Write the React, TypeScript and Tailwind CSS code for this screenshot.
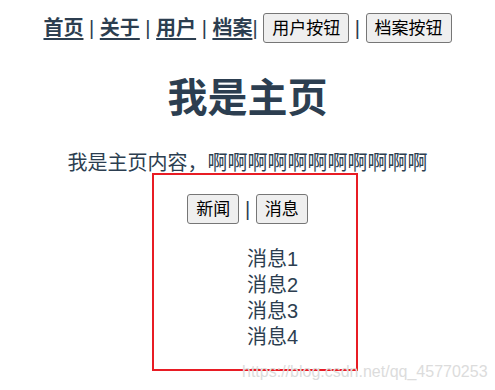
const navLinks = ["首页", "关于", "用户", "档案"];
const messages = ["消息1", "消息2", "消息3", "消息4"];

function Btn({ label, className = "" }: { label: string; className?: string }) {
  return (
    <button
      className={`h-[30px] px-[8px] bg-[#efefef] border border-[#767676] rounded-[3px] text-[17px] leading-none text-black ${className}`}
    >
      {label}
    </button>
  );
}

export default function App() {
  return (
    <div className="relative w-[495px] h-[390px] overflow-hidden bg-white text-[#2c3e50] font-['Liberation_Sans','Noto_Sans_CJK_SC',sans-serif]">
      {/* Nav */}
      <nav className="flex items-center justify-center pt-[13px] text-[20px] leading-[30px] whitespace-pre">
        {navLinks.map((label, i) => (
          <span key={label} className="flex items-center">
            <a href="#" className="font-bold underline underline-offset-[3px]">
              {label}
            </a>
            {i < navLinks.length - 1 ? <span> | </span> : <span>| </span>}
          </span>
        ))}
        <Btn label="用户按钮" />
        <span> | </span>
        <Btn label="档案按钮" />
      </nav>

      {/* Home */}
      <h1 className="mt-[31px] text-center text-[40px] leading-[48px] font-bold">我是主页</h1>
      <p className="mt-[28px] text-center text-[20px] leading-[26px]">我是主页内容，啊啊啊啊啊啊啊啊啊啊啊</p>

      <div className="mt-[18px] flex items-center justify-center whitespace-pre text-[20px]">
        <Btn label="新闻" className="h-[29px] px-[7px]" />
        <span> | </span>
        <Btn label="消息" className="h-[29px] px-[7px]" />
      </div>

      <ul className="mt-[22px] pl-[50px] list-none text-center text-[20px] leading-[26px]">
        {messages.map((m) => (
          <li key={m}>{m}</li>
        ))}
      </ul>

      {/* annotation box */}
      <div className="absolute left-[152px] top-[173px] w-[206px] h-[198px] border-2 border-[#e81c24] pointer-events-none" />

      {/* watermark */}
      <div className="absolute left-[242px] top-[362px] text-[16px] leading-[20px] text-[#dcdcdc] pointer-events-none">
        https://blog.csdn.net/qq_45770253
      </div>
    </div>
  );
}
